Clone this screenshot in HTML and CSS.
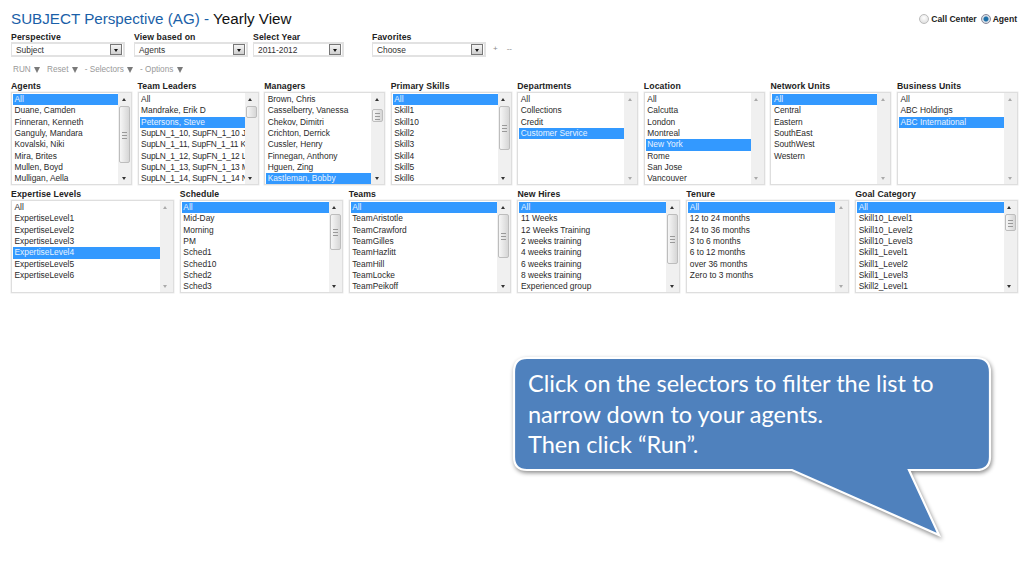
FILE: index.html
```html
<!DOCTYPE html>
<html lang="en">
<head>
<meta charset="utf-8">
<title>Yearly View</title>
<link rel="stylesheet" href="styles.css">
</head>
<body>
<div class="page">
  <header class="top">
    <h1 class="title"><span class="title-blue">SUBJECT Perspective (AG) - </span>Yearly View</h1>
    <div class="radios">
      <span class="radio"></span><span class="radio-label">Call Center</span>
      <span class="radio radio-on"></span><span class="radio-label">Agent</span>
    </div>
  </header>

  <div class="filters">
    <div class="field f1"><div class="label">Perspective</div><div class="select"><span class="select-text">Subject</span><span class="select-btn"></span></div></div>
    <div class="field f2"><div class="label">View based on</div><div class="select"><span class="select-text">Agents</span><span class="select-btn"></span></div></div>
    <div class="field f3"><div class="label">Select Year</div><div class="select"><span class="select-text">2011-2012</span><span class="select-btn"></span></div></div>
    <div class="field f4"><div class="label">Favorites</div><div class="select"><span class="select-text">Choose</span><span class="select-btn"></span></div></div>
    <div class="fav-actions"><span>+</span><span>--</span></div>
  </div>

  <nav class="toolbar">
    <span>RUN <i class="tri"></i></span>
    <span>Reset <i class="tri"></i></span>
    <span>- Selectors <i class="tri"></i></span>
    <span>- Options <i class="tri"></i></span>
  </nav>

  <section class="grid grid-8">
    <div class="group"><div class="label">Agents</div><div class="list">
      <div class="items"><div class="item on">All</div><div class="item">Duane, Camden</div><div class="item">Finneran, Kenneth</div><div class="item">Ganguly, Mandara</div><div class="item">Kovalski, Niki</div><div class="item">Mira, Brites</div><div class="item">Mullen, Boyd</div><div class="item">Mulligan, Aella</div></div>
      <div class="bar"><i class="up"></i><b class="thumb" style="top:13px;height:57px"></b><i class="down"></i></div>
    </div></div>
    <div class="group"><div class="label">Team Leaders</div><div class="list">
      <div class="items"><div class="item">All</div><div class="item">Mandrake, Erik D</div><div class="item on">Petersons, Steve</div><div class="item sup">SupLN_1_10, SupFN_1_10 J</div><div class="item sup">SupLN_1_11, SupFN_1_11 K</div><div class="item sup">SupLN_1_12, SupFN_1_12 L</div><div class="item sup">SupLN_1_13, SupFN_1_13 M</div><div class="item sup">SupLN_1_14, SupFN_1_14 N</div></div>
      <div class="bar"><i class="up"></i><b class="thumb plain" style="top:13px;height:12px"></b><i class="down"></i></div>
    </div></div>
    <div class="group"><div class="label">Managers</div><div class="list">
      <div class="items"><div class="item">Brown, Chris</div><div class="item">Casselberry, Vanessa</div><div class="item">Chekov, Dimitri</div><div class="item">Crichton, Derrick</div><div class="item">Cussler, Henry</div><div class="item">Finnegan, Anthony</div><div class="item">Hguen, Zing</div><div class="item on">Kastleman, Bobby</div></div>
      <div class="bar"><i class="up"></i><b class="thumb" style="top:16px;height:13px"></b><i class="down"></i></div>
    </div></div>
    <div class="group"><div class="label">Primary Skills</div><div class="list">
      <div class="items"><div class="item on">All</div><div class="item">Skill1</div><div class="item">Skill10</div><div class="item">Skill2</div><div class="item">Skill3</div><div class="item">Skill4</div><div class="item">Skill5</div><div class="item">Skill6</div></div>
      <div class="bar"><i class="up"></i><b class="thumb" style="top:13px;height:44px"></b><i class="down"></i></div>
    </div></div>
    <div class="group"><div class="label">Departments</div><div class="list">
      <div class="items"><div class="item">All</div><div class="item">Collections</div><div class="item">Credit</div><div class="item on">Customer Service</div></div>
      <div class="bar off"><i class="up"></i><i class="down"></i></div>
    </div></div>
    <div class="group"><div class="label">Location</div><div class="list">
      <div class="items"><div class="item">All</div><div class="item">Calcutta</div><div class="item">London</div><div class="item">Montreal</div><div class="item on">New York</div><div class="item">Rome</div><div class="item">San Jose</div><div class="item">Vancouver</div></div>
      <div class="bar off"><i class="up"></i><i class="down"></i></div>
    </div></div>
    <div class="group"><div class="label">Network Units</div><div class="list">
      <div class="items"><div class="item on">All</div><div class="item">Central</div><div class="item">Eastern</div><div class="item">SouthEast</div><div class="item">SouthWest</div><div class="item">Western</div></div>
      <div class="bar off"><i class="up"></i><i class="down"></i></div>
    </div></div>
    <div class="group"><div class="label">Business Units</div><div class="list">
      <div class="items"><div class="item">All</div><div class="item">ABC Holdings</div><div class="item on">ABC International</div></div>
      <div class="bar off"><i class="up"></i><i class="down"></i></div>
    </div></div>
  </section>

  <section class="grid grid-6">
    <div class="group"><div class="label">Expertise Levels</div><div class="list">
      <div class="items"><div class="item">All</div><div class="item">ExpertiseLevel1</div><div class="item">ExpertiseLevel2</div><div class="item">ExpertiseLevel3</div><div class="item on">ExpertiseLevel4</div><div class="item">ExpertiseLevel5</div><div class="item">ExpertiseLevel6</div></div>
      <div class="bar off"><i class="up"></i><i class="down"></i></div>
    </div></div>
    <div class="group"><div class="label">Schedule</div><div class="list">
      <div class="items"><div class="item on">All</div><div class="item">Mid-Day</div><div class="item">Morning</div><div class="item">PM</div><div class="item">Sched1</div><div class="item">Sched10</div><div class="item">Sched2</div><div class="item">Sched3</div></div>
      <div class="bar"><i class="up"></i><b class="thumb" style="top:13px;height:36px"></b><i class="down"></i></div>
    </div></div>
    <div class="group"><div class="label">Teams</div><div class="list">
      <div class="items"><div class="item on">All</div><div class="item">TeamAristotle</div><div class="item">TeamCrawford</div><div class="item">TeamGilles</div><div class="item">TeamHazlitt</div><div class="item">TeamHill</div><div class="item">TeamLocke</div><div class="item">TeamPeikoff</div></div>
      <div class="bar"><i class="up"></i><b class="thumb" style="top:13px;height:44px"></b><i class="down"></i></div>
    </div></div>
    <div class="group"><div class="label">New Hires</div><div class="list">
      <div class="items"><div class="item on">All</div><div class="item">11 Weeks</div><div class="item">12 Weeks Training</div><div class="item">2 weeks training</div><div class="item">4 weeks training</div><div class="item">6 weeks training</div><div class="item">8 weeks training</div><div class="item">Experienced group</div></div>
      <div class="bar"><i class="up"></i><b class="thumb" style="top:13px;height:50px"></b><i class="down"></i></div>
    </div></div>
    <div class="group"><div class="label">Tenure</div><div class="list">
      <div class="items"><div class="item on">All</div><div class="item">12 to 24 months</div><div class="item">24 to 36 months</div><div class="item">3 to 6 months</div><div class="item">6 to 12 months</div><div class="item">over 36 months</div><div class="item">Zero to 3 months</div></div>
      <div class="bar off"><i class="up"></i><i class="down"></i></div>
    </div></div>
    <div class="group"><div class="label">Goal Category</div><div class="list">
      <div class="items"><div class="item on">All</div><div class="item">Skill10_Level1</div><div class="item">Skill10_Level2</div><div class="item">Skill10_Level3</div><div class="item">Skill1_Level1</div><div class="item">Skill1_Level2</div><div class="item">Skill1_Level3</div><div class="item">Skill2_Level1</div></div>
      <div class="bar"><i class="up"></i><b class="thumb" style="top:13px;height:17px"></b><i class="down"></i></div>
    </div></div>
  </section>

  <div class="callout-row">
    <div class="callout">
      <svg class="callout-shape" width="490" height="185" viewBox="0 0 490 185" aria-hidden="true">
        <path d="M14 1 H463 Q477 1 477 15 V100 Q477 113 463 113 H396 L426 178 L279 113 H14 Q1 113 1 100 V15 Q1 1 14 1 Z" fill="#4f81bd" stroke="#fff" stroke-width="2.2" stroke-linejoin="miter"/>
      </svg>
      <p class="callout-text">Click on the selectors to filter the list to<br>narrow down to your agents.<br>Then click “Run”.</p>
    </div>
  </div>
</div>
</body>
</html>
```
FILE: styles.css
```css
* { box-sizing: border-box; }
html, body { margin: 0; padding: 0; background: #fff; }
body { font-family: "Liberation Sans", Arial, sans-serif; color: #222; overflow: hidden; }
.page { width: 1024px; height: 576px; padding: 0 6px 0 11px; }

.top { display: flex; justify-content: space-between; align-items: flex-start; height: 33px; padding-top: 10px; }
.title { margin: 0; font-size: 15.2px; line-height: 18px; font-weight: normal; color: #111; }
.title-blue { color: #1a5fa8; }
.radios { display: flex; align-items: center; gap: 2px; font-size: 8.6px; font-weight: bold; padding-top: 4px; color: #222; }
.radio { width: 10px; height: 10px; border-radius: 50%; border: 1px solid #bbb; background: radial-gradient(circle at 50% 35%, #fff, #d8d8d8); }
.radio-on { margin-left: 1px; border-color: #889; background: radial-gradient(circle, #1d6fa8 0 2px, #d5dde5 3px); }
.radio-label { line-height: 10px; margin-right: 1px; }

.filters { display: flex; align-items: flex-end; height: 24px; }
.label { font-size: 8.7px; line-height: 10px; font-weight: bold; color: #222; letter-spacing: .1px; white-space: nowrap; }
.f1 { width: 114px; margin-right: 9px; }
.f2 { width: 114px; margin-right: 5px; }
.f3 { width: 91px; margin-right: 28px; }
.f4 { width: 114px; }
.select { height: 15px; border: 2px solid #e2e2e2; border-left-width: 1px; display: flex; align-items: center; justify-content: space-between; background: #fff; padding: 0 1px 0 4px; }
.select-text { font-size: 8.4px; color: #333; }
.select-btn { width: 12px; height: 11px; border: 1px solid #777; background: linear-gradient(#f4f4f4, #cfcfcf); position: relative; }
.select-btn::after { content: ""; position: absolute; left: 2.5px; top: 3.5px; border: 2.5px solid transparent; border-top: 3px solid #111; border-bottom: 0; }
.fav-actions { display: flex; gap: 9px; font-size: 8px; color: #888; padding: 0 0 4px 7px; }

.toolbar { display: flex; gap: 7px; height: 24px; padding: 7px 0 0 2px; font-size: 8.2px; line-height: 12px; color: #999; }
.tri { display: inline-block; border: 3px solid transparent; border-top: 6px solid #7a7a7a; border-bottom: 0; margin-left: 1px; vertical-align: -1px; }

.grid { display: grid; }
.grid-8 { grid-template-columns: repeat(8, 1fr); column-gap: 5.5px; }
.grid-6 { grid-template-columns: repeat(6, 1fr); column-gap: 6px; margin-top: 4px; }
.group { min-width: 0; }
.list { height: 93px; margin-top: 1px; display: flex; border: 1px solid #dedede; background: #fff; box-shadow: 0 0 0 .5px #ececec; }
.items { flex: 1; min-width: 0; padding: 1px 0 0 1px; overflow: hidden; }
.item { height: 11.33px; line-height: 11.33px; font-size: 8.4px; padding-left: 1.5px; color: #2a2a2a; white-space: nowrap; overflow: hidden; }
.item.sup { letter-spacing: -.2px; }
.item.on { background: #3399ff; color: #e8f3ff; }

.bar { width: 13px; flex: none; background: #f0f0f0; position: relative; }
.up, .down { position: absolute; left: 3.5px; border: 2.5px solid transparent; }
.up { top: 5px; border-bottom: 3px solid #333; border-top: 0; }
.down { bottom: 4px; border-top: 3px solid #333; border-bottom: 0; }
.off .up { border-bottom-color: #aaa; }
.off .down { border-top-color: #aaa; }
.thumb { position: absolute; left: 1px; right: 1px; border: 1px solid #bdbdbd; border-radius: 2px; background: linear-gradient(90deg, #f6f6f6, #d6d6d6); }
.thumb::after { content: ""; position: absolute; left: 2px; right: 2px; top: 50%; height: 5px; margin-top: -3px; border-top: 1px solid #999; border-bottom: 1px solid #999; background: linear-gradient(#999, #999) center / 100% 1px no-repeat; }
.thumb.plain::after { display: none; }

.callout-row { display: flex; justify-content: flex-end; padding: 64px 28px 0 0; }
.callout { position: relative; width: 477px; height: 114px; }
.callout-shape { position: absolute; left: 0; top: 0; overflow: visible; filter: drop-shadow(1px 2px 2px rgba(0,0,0,.45)); }
.callout-text { position: relative; margin: 0; padding: 11px 0 0 15px; font-family: Lato, Carlito, sans-serif; font-size: 23.5px; line-height: 30.5px; color: #fff; white-space: nowrap; }
```
